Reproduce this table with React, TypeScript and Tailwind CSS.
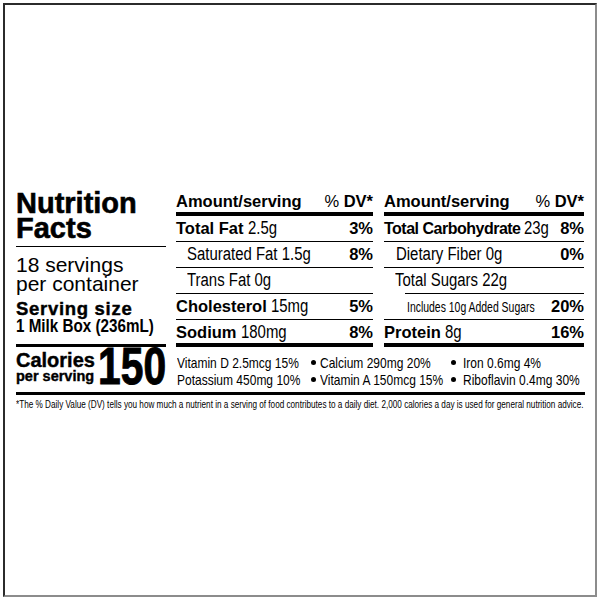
type Row = {
  bold?: string;
  text: string;
  dv?: string;
  indent?: string;
  small?: boolean;
  tight?: boolean;
  last?: boolean;
  line: "thin" | "thick" | "indent";
};

function Header() {
  return (
    <div className="flex justify-between text-[16.5px] leading-[20px] pb-[1px] border-b-4 border-black whitespace-nowrap">
      <span className="font-bold">Amount/serving</span>
      <span>
        % <span className="font-bold">DV*</span>
      </span>
    </div>
  );
}

function TableRow({ r }: { r: Row }) {
  return (
    <div className="flex flex-col">
      <div
        className={
          "flex justify-between items-baseline leading-[25px] whitespace-nowrap " +
          (r.last ? "h-[23px] " : "h-[25px] ") +
          (r.indent ?? "")
        }
      >
        <span className="min-w-0 flex-1">
          {r.bold && (
            <span className={"font-bold " + (r.tight ? "tracking-[-0.5px] text-[16px]" : "text-[16.5px]")}>{r.bold} </span>
          )}
          {r.small ? (
            <span className="inline-block origin-left scale-x-[0.72] text-[14.5px]">{r.text}</span>
          ) : (
            <span className="inline-block origin-left scale-x-[0.83] text-[18px]">{r.text}</span>
          )}
        </span>
        <span className="font-bold text-[16.5px] shrink-0">{r.dv}</span>
      </div>
      {r.line === "thin" && <div className="h-px bg-black" />}
      {r.line === "indent" && <div className="h-px bg-black ml-[21px]" />}
      {r.line === "thick" && <div className="h-[4px] bg-black" />}
    </div>
  );
}

function Table({ rows, width }: { rows: Row[]; width: string }) {
  return (
    <div className={"flex flex-col " + width}>
      <Header />
      {rows.map((r, i) => (
        <TableRow key={i} r={r} />
      ))}
    </div>
  );
}

const middle: Row[] = [
  { bold: "Total Fat", text: "2.5g", dv: "3%", line: "thin" },
  { text: "Saturated Fat 1.5g", dv: "8%", indent: "pl-[11px]", line: "thin" },
  { text: "Trans Fat 0g", dv: "", indent: "pl-[11px]", line: "thin" },
  { bold: "Cholesterol", text: "15mg", dv: "5%", line: "thin" },
  { bold: "Sodium", text: "180mg", dv: "8%", last: true, line: "thick" },
];

const right: Row[] = [
  { bold: "Total Carbohydrate", text: "23g", dv: "8%", tight: true, line: "thin" },
  { text: "Dietary Fiber 0g", dv: "0%", indent: "pl-[12px]", line: "thin" },
  { text: "Total Sugars 22g", dv: "", indent: "pl-[11px]", line: "indent" },
  { text: "Includes 10g Added Sugars", dv: "20%", indent: "pl-[23px]", small: true, line: "thin" },
  { bold: "Protein", text: "8g", dv: "16%", last: true, line: "thick" },
];

function Dot() {
  return (
    <span className="flex items-center justify-center">
      <span className="w-[5px] h-[5px] rounded-full bg-black" />
    </span>
  );
}

function V({ children }: { children: string }) {
  return <span className="inline-block origin-left scale-x-[0.8] whitespace-nowrap">{children}</span>;
}

export default function App() {
  return (
    <div className="w-[600px] h-[600px] overflow-hidden bg-white p-[3px] font-['Liberation_Sans',Arial,sans-serif] text-black">
      <div className="w-full h-full border-2 border-t-[#2b2b2b] border-l-[#2b2b2b] border-r-[#8c8c8c] border-b-[#8c8c8c] pl-[11px] pt-[186px]">
        <div className="w-[569px]">
          <div className="flex border-b-[3px] border-black">
            <div className="w-[150px] flex flex-col">
              <div className="font-bold text-[29px] leading-[25px] pb-[5px] border-b border-black [-webkit-text-stroke:0.6px_black]">
                <div>Nutrition</div>
                <div>Facts</div>
              </div>
              <div className="text-[21px] leading-[19px] pt-[8px]">
                <div>18 servings</div>
                <div>per container</div>
              </div>
              <div className="mt-[7px] font-bold text-[18.5px] leading-[18px] tracking-[0.7px] whitespace-nowrap [-webkit-text-stroke:0.4px_black]">
                Serving size
              </div>
              <div className="font-bold text-[18px] leading-[16px] pb-[10px] border-b-[3px] border-black whitespace-nowrap">
                <span className="inline-block origin-left scale-x-[0.845]">1 Milk Box (236mL)</span>
              </div>
              <div className="flex justify-between items-start pt-[1px]">
                <div className="pt-[2px] [-webkit-text-stroke:0.4px_black]">
                  <div className="font-bold text-[20px] leading-[20px]">Calories</div>
                  <div className="font-bold text-[14.5px] leading-[13px] whitespace-nowrap">per serving</div>
                </div>
                <div className="w-[70px] flex justify-end font-bold text-[51px] leading-[38px] whitespace-nowrap [-webkit-text-stroke:1px_black]">
                  <span className="inline-block shrink-0 origin-right scale-x-[0.8]">150</span>
                </div>
              </div>
            </div>
            <div className="ml-[10px] w-[408px] flex flex-col">
              <div className="flex gap-[11px]">
                <Table rows={middle} width="w-[197px]" />
                <Table rows={right} width="w-[200px]" />
              </div>
              <div className="grid grid-cols-[129px_14px_124px_19px_1fr] text-[15px] leading-[17px] pt-[6.5px] pb-[4px] pl-[1px]">
                <V>Vitamin D 2.5mcg 15%</V>
                <Dot />
                <V>Calcium 290mg 20%</V>
                <Dot />
                <V>Iron 0.6mg 4%</V>
                <V>Potassium 450mg 10%</V>
                <Dot />
                <V>Vitamin A 150mcg 15%</V>
                <Dot />
                <V>Riboflavin 0.4mg 30%</V>
              </div>
            </div>
          </div>
          <div className="mt-[4px] text-[10px] leading-[12px] whitespace-nowrap">
            <span className="inline-block origin-left scale-x-[0.817]">
              *The % Daily Value (DV) tells you how much a nutrient in a serving of food contributes to a daily diet. 2,000 calories a day is used for general nutrition advice.
            </span>
          </div>
        </div>
      </div>
    </div>
  );
}
